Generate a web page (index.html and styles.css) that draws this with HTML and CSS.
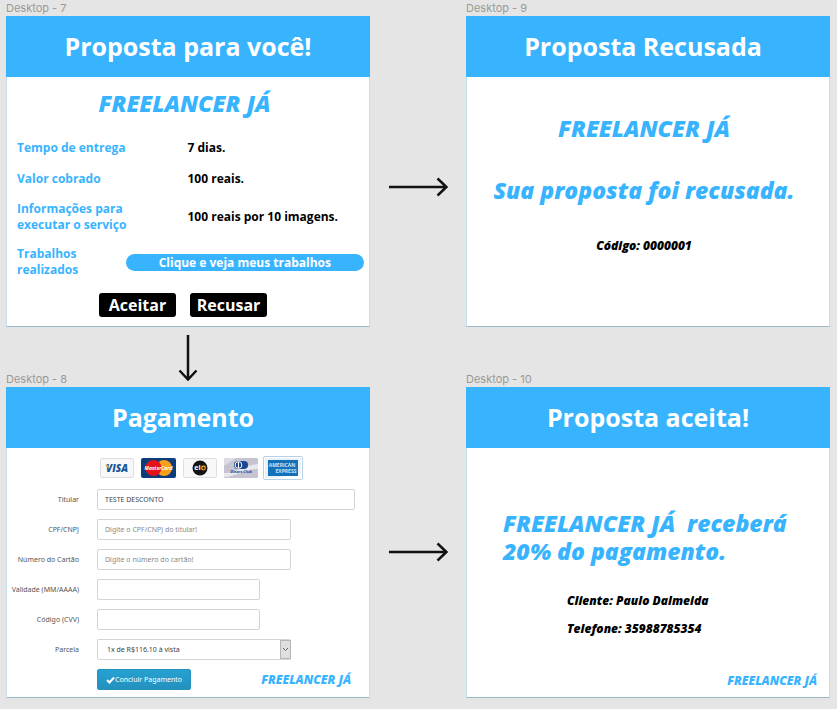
FILE: index.html
```html
<!DOCTYPE html>
<html lang="pt-BR">
<head>
<meta charset="utf-8">
<meta name="viewport" content="width=device-width, initial-scale=1">
<title>Freelancer Já</title>
<link rel="stylesheet" href="styles.css">
</head>
<body>
<main class="board">
  <section class="frame">
    <p class="frame-name">Desktop - 7</p>
    <article class="screen">
      <h1 class="bar">Proposta para você!</h1>
      <div class="offer">
        <p class="display">FREELANCER JÁ</p>
        <dl class="details">
          <div class="detail"><dt>Tempo de entrega</dt><dd>7 dias.</dd></div>
          <div class="detail"><dt>Valor cobrado</dt><dd>100 reais.</dd></div>
          <div class="detail"><dt>Informações para<br>executar o serviço</dt><dd>100 reais por 10 imagens.</dd></div>
          <div class="detail detail-link"><dt>Trabalhos<br>realizados</dt><dd><a class="pill" href="#trabalhos">Clique e veja meus trabalhos</a></dd></div>
        </dl>
        <div class="actions">
          <button class="action" type="button">Aceitar</button>
          <button class="action" type="button">Recusar</button>
        </div>
      </div>
    </article>
  </section>

  <div class="link link-top">
    <svg width="60" height="20" viewBox="0 0 60 20" class="arrow" aria-hidden="true"><path d="M1 10H58M49.500 1.500L58.500 10L49.500 18.500"/></svg>
  </div>

  <section class="frame">
    <p class="frame-name">Desktop - 9</p>
    <article class="screen">
      <h1 class="bar bar-inset">Proposta Recusada</h1>
      <div class="refused">
        <p class="display">FREELANCER JÁ</p>
        <p class="display">Sua proposta foi recusada.</p>
        <p class="note">Código: 0000001</p>
      </div>
    </article>
  </section>

  <div class="link-down">
    <svg width="20" height="46" viewBox="0 0 20 46" class="arrow" aria-hidden="true"><path d="M10 0V44M1.500 35.500L10 44.500L18.500 35.500"/></svg>
  </div>

  <section class="frame">
    <p class="frame-name">Desktop - 8</p>
    <article class="screen">
      <h1 class="bar bar-inset">Pagamento</h1>
      <form class="payment">
        <div class="brands">
          <svg width="34" height="22" viewBox="0 0 34 22" role="img" aria-label="Visa">
            <rect x=".5" y="1.500" width="33" height="19" rx="1.500" fill="#f8f8f8" stroke="#dedede"/>
            <text x="17" y="15" text-anchor="middle" class="logo visa">VISA</text>
            <path d="M5 8h3l1 4z" fill="#e8a823"/>
          </svg>
          <svg width="35" height="22" viewBox="0 0 35 22" role="img" aria-label="MasterCard">
            <rect y="1" width="35" height="20" rx="2" fill="#0b3d7c"/>
            <circle cx="23" cy="11" r="8" fill="#f9a01b"/>
            <circle cx="12.500" cy="11" r="8" fill="#e3131b"/>
            <text x="17.500" y="13" text-anchor="middle" class="logo master">MasterCard</text>
          </svg>
          <svg width="34" height="22" viewBox="0 0 34 22" role="img" aria-label="Elo">
            <rect x=".5" y="1.500" width="33" height="19" rx="1.500" fill="#f8f8f8" stroke="#dedede"/>
            <circle cx="17" cy="11" r="7.500" fill="#151515"/>
            <text x="14.500" y="13" text-anchor="middle" class="logo elo">el</text>
            <circle cx="20.500" cy="11" r="1.800" fill="none" stroke="#f3c51b" stroke-width="1.200"/>
            <path d="M20.500 12.800a1.800 1.800 0 0 0 1.800-1.800" fill="none" stroke="#e0402c" stroke-width="1.200"/>
          </svg>
          <svg width="34" height="22" viewBox="0 0 34 22" role="img" aria-label="Diners Club">
            <rect y="1" width="34" height="20" rx="1" fill="#c6c4d1"/>
            <path d="M0 16C10 17 18 9 34 7V12C20 12 12 20 0 20z" fill="#e9e8ef"/>
            <path d="M0 1h12L0 9z" fill="#dddce5"/>
            <rect x="10" y="4" width="14" height="8" rx="4" fill="#1c4594"/>
            <circle cx="14.500" cy="8" r="3.400" fill="#1c4594" stroke="#fff"/>
            <path d="M14.500 5v6" stroke="#fff"/>
            <text x="17" y="16" text-anchor="middle" class="logo diners">Diners Club</text>
          </svg>
          <svg width="40" height="24" viewBox="0 0 40 24" role="img" aria-label="American Express">
            <rect x=".5" y=".5" width="39" height="23" rx="1.500" fill="#fff" stroke="#b9cfe3"/>
            <rect x="2" y="2" width="36" height="20" fill="#eaf2f9"/>
            <path d="M15 22L38 17V22z" fill="#fff"/>
            <rect x="5" y="4" width="30" height="16" fill="#1470b8"/>
            <text x="19" y="11" text-anchor="middle" class="logo amex">AMERICAN</text>
            <text x="23" y="17" text-anchor="middle" class="logo amex">EXPRESS</text>
          </svg>
        </div>
        <div class="row"><label for="titular">Titular</label><div class="cell"><input id="titular" type="text" value="TESTE DESCONTO"></div></div>
        <div class="row"><label for="cpf">CPF/CNPJ</label><div class="cell"><input id="cpf" class="medium" type="text" placeholder="Digite o CPF/CNPJ do titular!"></div></div>
        <div class="row"><label for="cartao">Número do Cartão</label><div class="cell"><input id="cartao" class="medium" type="text" placeholder="Digite o número do cartão!"></div></div>
        <div class="row"><label for="validade">Validade (MM/AAAA)</label><div class="cell"><input id="validade" class="short" type="text"></div></div>
        <div class="row"><label for="cvv">Código (CVV)</label><div class="cell"><input id="cvv" class="short" type="text"></div></div>
        <div class="row"><label for="parcela">Parcela</label><div class="cell"><div class="select medium">
          <select id="parcela"><option>1x de R$116.10 à vista</option></select>
          <svg class="chevron" width="11" height="19" viewBox="0 0 11 19" aria-hidden="true"><rect x=".5" y=".5" width="10" height="18" fill="#dfdfdf" stroke="#b5b5b5"/><path d="M3 8l2.500 2.500L8 8" fill="none" stroke="#666"/></svg>
        </div></div></div>
        <div class="row"><span></span><div class="cell finish">
          <button class="pay" type="submit"><svg width="9" height="8" viewBox="0 0 9 8" aria-hidden="true"><path d="M1 4l2.500 2.500L8 1.500" fill="none" stroke="#fff" stroke-width="2"/></svg>Concluir Pagamento</button>
          <span class="note brand">FREELANCER JÁ</span>
        </div></div>
      </form>
    </article>
  </section>

  <div class="link link-bottom">
    <svg width="60" height="20" viewBox="0 0 60 20" class="arrow" aria-hidden="true"><path d="M1 10H58M49.500 1.500L58.500 10L49.500 18.500"/></svg>
  </div>

  <section class="frame">
    <p class="frame-name">Desktop - 10</p>
    <article class="screen">
      <h1 class="bar">Proposta aceita!</h1>
      <div class="accepted">
        <p class="display">FREELANCER JÁ&nbsp; receberá<br>20% do pagamento.</p>
        <div class="contact">
          <p class="note">Cliente: Paulo Dalmeida</p>
          <p class="note">Telefone: 35988785354</p>
        </div>
        <p class="note brand">FREELANCER JÁ</p>
      </div>
    </article>
  </section>
</main>
</body>
</html>
```
FILE: styles.css
```css
* { box-sizing: border-box; }

body {
  margin: 0;
  background: #e5e5e5;
  color: #000;
  font-family: "Open Sans", "Noto Sans", sans-serif;
}

h1, p, dl, dd { margin: 0; }

.board {
  display: grid;
  grid-template-columns: 364fr 96fr 364fr;
  padding: 0 7px 11px 6px;
}

.frame {
  display: flex;
  flex-direction: column;
}

.frame-name {
  height: 16px;
  color: #999;
  font: 11px/16px Inter, sans-serif;
}

.screen {
  flex: 1;
  display: flex;
  flex-direction: column;
  background: #fff;
  border: solid #c3e0f0;
  border-width: 0 1px 1px;
  border-bottom-color: #9cbacd;
}

.bar {
  margin: 0 -1px;
  padding: 12px 0 13px;
  background: #38b4ff;
  color: #fff;
  font-size: 25px;
  line-height: 36px;
  font-weight: 700;
  text-align: center;
}

.bar-inset { padding-right: 10px; }

.display {
  color: #38b4ff;
  font: italic 800 23px/28px "Open Sans", sans-serif;
}

.note {
  font: italic 800 12px/16px "Open Sans", sans-serif;
}

.brand { color: #38b4ff; }

/* Offer */
.offer { padding: 12px 5px 9px 10px; }

.offer .display {
  padding-right: 12px;
  text-align: center;
}

.details {
  display: grid;
  gap: 13px;
  padding-top: 22px;
  font-size: 12px;
  line-height: 16px;
  font-weight: 700;
}

.detail {
  display: grid;
  grid-template-columns: 171fr 177fr;
  align-items: center;
  min-height: 18px;
}

.detail-link { grid-template-columns: 109fr 239fr; }

.detail dt { color: #38b4ff; }

.pill {
  display: block;
  border-radius: 9px;
  background: #38b4ff;
  color: #fff;
  line-height: 17px;
  text-align: center;
  text-decoration: none;
}

.actions {
  display: flex;
  justify-content: center;
  gap: 14px;
  padding: 15px 15px 0 0;
}

.action {
  width: 77px;
  height: 24px;
  padding: 0;
  border: 0;
  border-radius: 3px;
  background: #000;
  color: #fff;
  font: 700 16px/24px "Open Sans", sans-serif;
}

/* Refused */
.refused {
  display: flex;
  flex-direction: column;
  align-items: center;
  padding: 37px 8px 0 0;
}

.refused .display + .display { margin-top: 34px; }
.refused .note { margin-top: 34px; }

/* Accepted */
.accepted {
  flex: 1;
  display: flex;
  flex-direction: column;
  padding: 61px 12px 8px 36px;
}

.contact {
  display: grid;
  gap: 12px;
  padding: 28px 0 0 64px;
}

.accepted .brand {
  margin-top: auto;
  text-align: right;
}

/* Payment */
.payment {
  display: grid;
  gap: 9px;
  padding: 8px 14px 7px 2px;
  color: #555;
  font: 7px/21px "Noto Sans", sans-serif;
}

.brands {
  display: flex;
  align-items: center;
  gap: 7px;
  height: 24px;
  padding-left: 91px;
}

.brands svg:last-child { margin-left: -2px; }

.logo { font-family: "Open Sans", sans-serif; font-weight: 700; }
.visa { fill: #16549b; font-size: 10px; font-style: italic; font-weight: 800; }
.master { fill: #fff; font-size: 5px; font-style: italic; }
.elo { fill: #fff; font-size: 7px; }
.diners { fill: #1c4594; font-size: 4px; font-style: italic; }
.amex { fill: #cfe6f7; font-size: 5px; }

.row {
  display: grid;
  grid-template-columns: 70px 1fr;
  column-gap: 18px;
  height: 21px;
}

.row label {
  text-align: right;
  white-space: nowrap;
}

.cell { display: flex; }

.row input,
.row select {
  width: 100%;
  height: 21px;
  padding: 0 7px;
  border: 1px solid #d4d4d4;
  border-radius: 2px;
  background: #fff;
  color: #444;
  font: 7px "Noto Sans", sans-serif;
}

.row select {
  padding-left: 9px;
  appearance: none;
}

.row input::placeholder { color: #888; }
.row .medium { width: 75%; }
.row .short { width: 63%; }

.select { position: relative; }

.chevron {
  position: absolute;
  top: 1px;
  right: 0;
  pointer-events: none;
}

.finish {
  align-items: center;
  justify-content: space-between;
  padding-right: 4px;
}

.pay {
  display: flex;
  align-items: center;
  justify-content: center;
  width: 94px;
  height: 21px;
  padding: 0;
  border: 1px solid #2390bd;
  border-radius: 2px;
  background: linear-gradient(#25a2d3, #2490bd);
  color: #fff;
  font: 7px "Noto Sans", sans-serif;
}

/* Connectors */
.arrow {
  fill: none;
  stroke: #111;
  stroke-width: 2.5;
}

.link {
  display: flex;
  align-items: flex-start;
  justify-content: center;
}

.link-top { padding-top: 177px; }
.link-bottom { padding-top: 171px; }

.link-down {
  grid-column: 1 / -1;
  display: grid;
  grid-template-columns: 364fr 460fr;
  justify-items: center;
  height: 44px;
  padding-top: 8px;
}
```
